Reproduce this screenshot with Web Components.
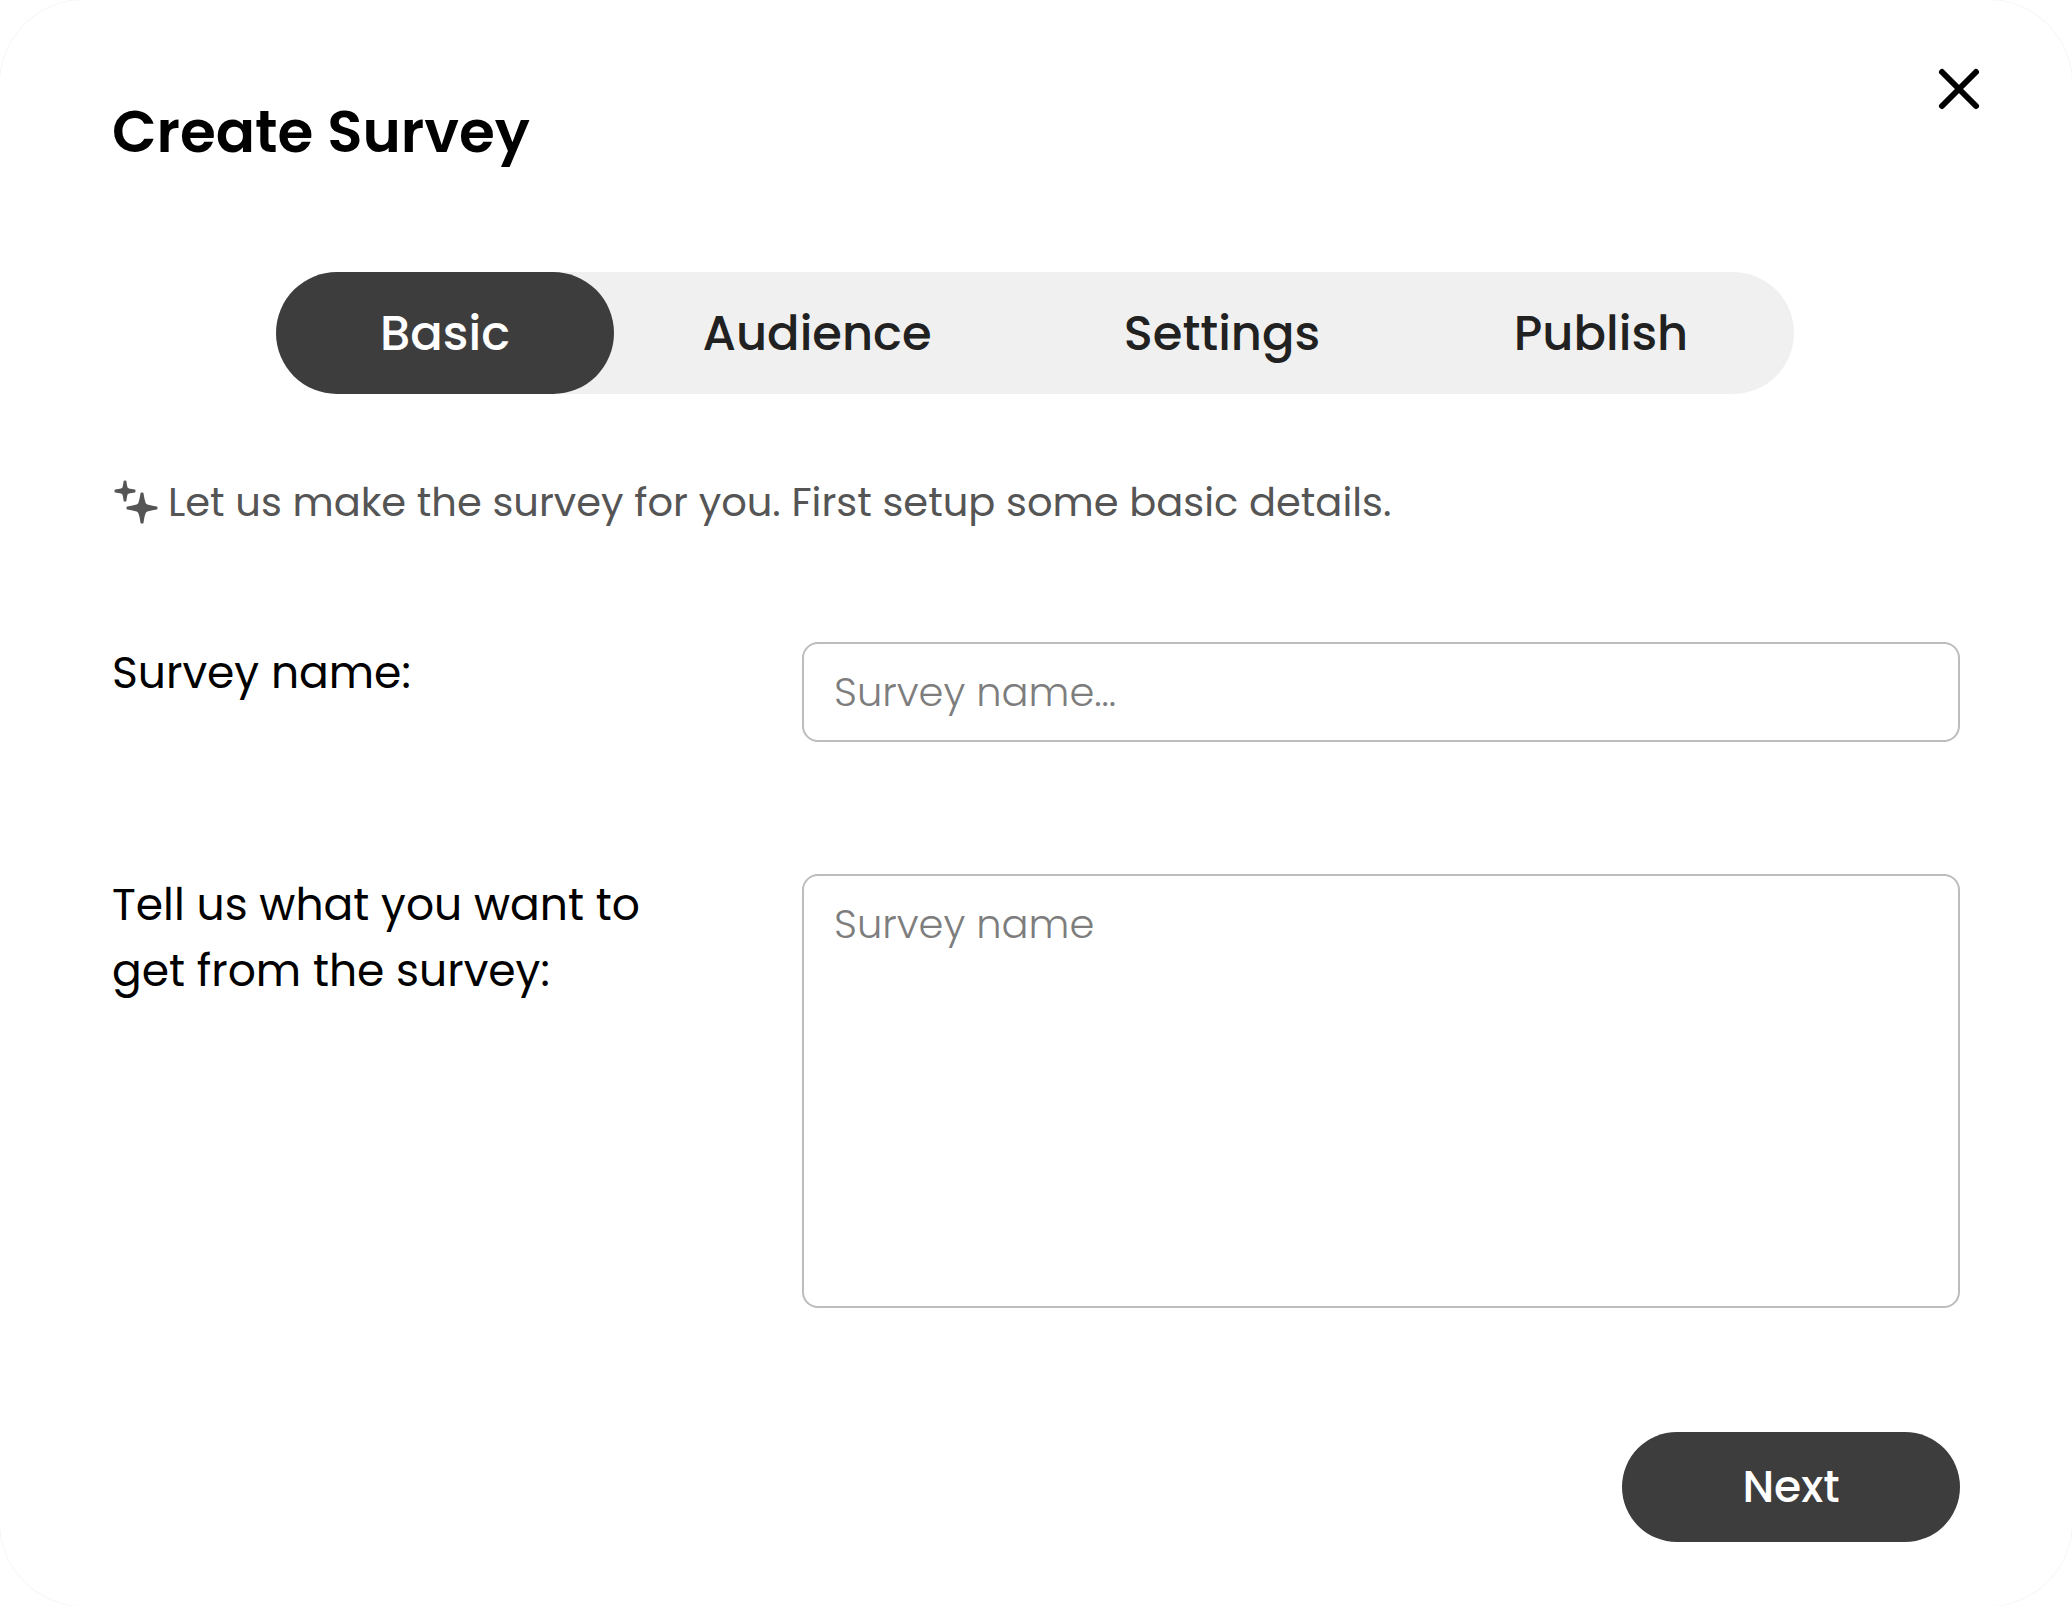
<!DOCTYPE html>
<html lang="en">
<head>
<meta charset="utf-8">
<meta name="viewport" content="width=device-width, initial-scale=1">
<title>Create Survey</title>
<style>
  body { margin: 0; background: #fff; color: #000; font-family: Poppins, Inter, "Open Sans", sans-serif; }
</style>
</head>
<body>
<survey-dialog heading="Create Survey">
  <step-tabs slot="steps">
    <step-tab selected>Basic</step-tab>
    <step-tab>Audience</step-tab>
    <step-tab>Settings</step-tab>
    <step-tab>Publish</step-tab>
  </step-tabs>
  <hint-line>Let us make the survey for you. First setup some basic details.</hint-line>
  <form-field label="Survey name:" placeholder="Survey name..."></form-field>
  <form-field multiline label="Tell us what you want to get from the survey:" placeholder="Survey name"></form-field>
  <pill-button slot="actions">Next</pill-button>
</survey-dialog>

<script>
const define = (name, render) => customElements.define(name, class extends HTMLElement {
  connectedCallback() {
    if (this.shadowRoot) return;
    this.attachShadow({ mode: 'open' }).innerHTML = render(this);
  }
});

define('survey-dialog', el => `
  <style>
    :host { display: block; box-sizing: border-box; min-height: 100vh; background: #fff; border-radius: 84px; box-shadow: 0 0 0 1px #f6f6f6; }
    header { display: flex; justify-content: space-between; align-items: flex-start; padding: 60px 84px 0 112px; }
    h1 { margin: 28px 0 0; font-size: 58px; line-height: 88px; font-weight: 600; }
    .close { display: block; width: 58px; height: 58px; padding: 0; border: 0; background: none; cursor: pointer; }
    .close svg { display: block; width: 100%; height: 100%; }
    .steps { display: flex; justify-content: center; padding: 96px 114px 0 112px; }
    main { display: flex; flex-direction: column; padding: 78px 112px 0; }
    footer { display: flex; justify-content: flex-end; padding: 124px 112px 64px; }
  </style>
  <header>
    <h1>${el.getAttribute('heading')}</h1>
    <button class="close" type="button" aria-label="Close">
      <svg viewBox="0 0 58 58" fill="none" stroke="#000" stroke-width="6" stroke-linecap="round"><path d="M12 12 46 46M46 12 12 46"/></svg>
    </button>
  </header>
  <div class="steps"><slot name="steps"></slot></div>
  <main><slot></slot></main>
  <footer><slot name="actions"></slot></footer>`);

define('step-tabs', () => `
  <style>
    :host { display: block; flex: 0 1 1518px; }
    nav { display: grid; grid-template-columns: 338fr 406fr 404fr 354fr; box-sizing: border-box; padding-right: 16px; border-radius: 61px; background: #f0f0f0; }
  </style>
  <nav aria-label="Steps"><slot></slot></nav>`);

define('step-tab', () => `
  <style>
    :host { display: block; }
    button { display: block; box-sizing: border-box; width: 100%; height: 122px; padding: 2px 0 0; border: 0; border-radius: 61px; background: none; color: #212121; font: 500 48px/72px Poppins, Inter, "Open Sans", sans-serif; cursor: pointer; }
    :host([selected]) button { background: #3d3d3d; color: #fff; }
  </style>
  <button type="button"><slot></slot></button>`);

define('hint-line', () => `
  <style>
    :host { display: block; }
    p { display: flex; align-items: center; gap: 8px; margin: 0 0 108px; color: #555; font-size: 40px; line-height: 60px; }
    svg { flex: none; width: 48px; height: 48px; }
  </style>
  <p>
    <svg viewBox="0 0 48 48" fill="#555" stroke="#555" stroke-width="2" stroke-linejoin="round" aria-hidden="true">
      <path d="M12.600 3.500H13.400C14 8 14.400 10 15.200 10.800 16 11.600 18 12 22.500 12.600V13.400C18 14 16 14.400 15.200 15.200 14.400 16 14 18 13.400 22.500H12.600C12 18 11.600 16 10.800 15.200 10 14.400 8 14 3.500 13.400V12.600C8 12 10 11.600 10.800 10.800 11.600 10 12 8 12.600 3.500Z"/>
      <path d="M29.500 15.500H30.500C31.500 22 32 25 33.500 26.500 35 28 38 28.500 44.500 29.500V30.500C38 31.500 35 32 33.500 33.500 32 35 31.500 38 30.500 44.500H29.500C28.500 38 28 35 26.500 33.500 25 32 22 31.500 15.500 30.500V29.500C22 28.500 25 28 26.500 26.500 28 25 28.500 22 29.500 15.500Z"/>
    </svg>
    <span><slot></slot></span>
  </p>`);

define('form-field', el => `
  <style>
    :host { display: block; }
    :host([multiline]) { margin-top: 130px; }
    .row { display: grid; grid-template-columns: 560px minmax(0, 1fr); column-gap: 130px; align-items: start; }
    label { font-size: 44px; line-height: 66px; }
    input, textarea { display: block; box-sizing: border-box; width: 100%; margin: 2px 0 0; border: 2px solid #bdbdbd; border-radius: 16px; background: #fff; color: #000; font: 300 40px/60px Poppins, Inter, "Open Sans", sans-serif; outline: none; }
    input { height: 100px; padding: 0 30px; }
    textarea { height: 434px; padding: 18px 30px; resize: none; }
    ::placeholder { color: #7d7d7d; opacity: 1; }
  </style>
  <div class="row">
    <label for="field">${el.getAttribute('label')}</label>
    ${el.hasAttribute('multiline')
      ? `<textarea id="field" placeholder="${el.getAttribute('placeholder')}"></textarea>`
      : `<input id="field" type="text" placeholder="${el.getAttribute('placeholder')}">`}
  </div>`);

define('pill-button', () => `
  <style>
    :host { display: block; }
    button { display: block; min-width: 338px; height: 110px; padding: 0 64px; border: 0; border-radius: 55px; background: #3d3d3d; color: #fff; font: 500 44px/66px Poppins, Inter, "Open Sans", sans-serif; cursor: pointer; }
  </style>
  <button type="button"><slot></slot></button>`);
</script>
</body>
</html>
